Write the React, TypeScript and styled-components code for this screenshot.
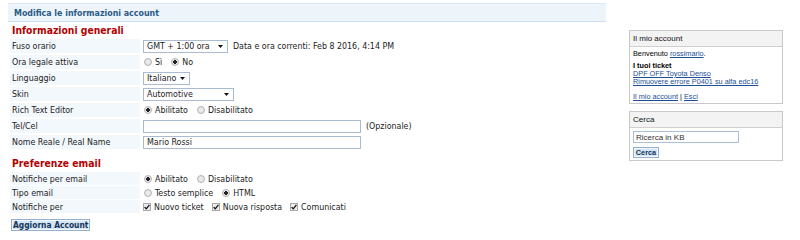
import React from "react";
import styled, { createGlobalStyle } from "styled-components";

const Global = createGlobalStyle`
  html, body { margin: 0; padding: 0; background: #ffffff; }
  body { font-family: "DejaVu Sans Condensed", "DejaVu Sans", Verdana, sans-serif; }
`;

const Page = styled.div`
  display: flex;
  align-items: flex-start;
  gap: 23px;
  padding: 3px 0 0 8px;
  width: 800px;
  height: 240px;
  box-sizing: border-box;
`;

const Main = styled.div`
  width: 598px;
  font-family: "DejaVu Sans Condensed", "DejaVu Sans", Verdana, sans-serif;
  font-size: 8.8px;
  color: #222;
`;

const HeaderBar = styled.div`
  height: 17px;
  display: flex;
  align-items: center;
  padding-left: 6px;
  background: #edf4fa;
  border-top: 1px solid #dde9f4;
  border-bottom: 1px solid #cddff0;
  font-weight: bold;
  color: #2a5a86;
`;

const SectionTitle = styled.div<{ $top: number }>`
  margin: ${(p) => p.$top}px 0 0 4px;
  height: 13px;
  line-height: 13px;
  font-size: 10.3px;
  font-weight: bold;
  color: #b30000;
`;

const Table = styled.div<{ $gap: number; $top: number }>`
  display: grid;
  grid-template-columns: 130px 1fr;
  column-gap: 3px;
  row-gap: ${(p) => p.$gap}px;
  margin: ${(p) => p.$top}px 0 0 2px;
`;

const Label = styled.div<{ $h: number }>`
  height: ${(p) => p.$h}px;
  display: flex;
  align-items: center;
  padding-left: 2px;
  background: #f3f8fd;
`;

const Value = styled.div<{ $h: number }>`
  height: ${(p) => p.$h}px;
  display: flex;
  align-items: center;
`;

const SelectWrap = styled.span<{ $w: number }>`
  position: relative;
  display: inline-flex;
  width: ${(p) => p.$w}px;
  height: 13px;
`;

const Select = styled.select`
  appearance: none;
  -webkit-appearance: none;
  width: 100%;
  height: 100%;
  box-sizing: border-box;
  margin: 0;
  padding: 0 0 0 3px;
  border: 1px solid #a9bcd2;
  border-radius: 0;
  background: #fff;
  font: inherit;
  color: #222;
  line-height: 11px;
  outline: none;
`;

const Arrow = styled.svg`
  position: absolute;
  right: 5px;
  top: 5px;
  width: 5px;
  height: 3px;
  pointer-events: none;
`;

const TextInput = styled.input<{ $w: number }>`
  width: ${(p) => p.$w}px;
  height: 13px;
  box-sizing: border-box;
  margin: 0;
  padding: 0 0 0 3px;
  border: 1px solid #a9bcd2;
  background: #fff;
  font: inherit;
  color: #222;
  outline: none;
`;

const Note = styled.span`
  margin-left: 5px;
`;

const Option = styled.span`
  display: inline-flex;
  align-items: center;
  gap: 3px;
  margin-right: 8px;
`;

const RadioDot = styled.span<{ $on?: boolean }>`
  width: 8px;
  height: 8px;
  box-sizing: border-box;
  border-radius: 50%;
  border: 1px solid #b4b4b4;
  background: radial-gradient(circle at 50% 50%, ${(p) => (p.$on ? "#222 0 1.6px, #e4e4e4 2px" : "#f0f0f0 0, #dcdcdc 100%")});
  margin-left: 1px;
`;

const CheckBox = styled.span`
  width: 8px;
  height: 8px;
  box-sizing: border-box;
  border: 1px solid #a8a8a8;
  background: #ececec;
  display: inline-flex;
  align-items: center;
  justify-content: center;
`;

const Button = styled.button<{ $h: number }>`
  height: ${(p) => p.$h}px;
  margin: 0;
  padding: 0 2px;
  border: 1px solid #93b0cc;
  box-shadow: inset 0 0 0 1px #f2f7fc;
  background: #d6e5f3;
  color: #12355c;
  font-weight: bold;
  line-height: 1;
  white-space: nowrap;
  cursor: pointer;
  display: block;
`;

const MainButton = styled(Button)`
  margin: 6px 0 0 3px;
  padding: 0 1px;
  font-family: "DejaVu Sans Condensed", "DejaVu Sans", Verdana, sans-serif;
  font-size: 8.4px;
`;

const Sidebar = styled.aside`
  width: 154px;
  margin-top: 27px;
  display: flex;
  flex-direction: column;
  gap: 7px;
  font-family: "Liberation Sans", Arial, sans-serif;
  font-size: 7.3px;
  color: #000;
`;

const Box = styled.section`
  border: 1px solid #c9c9c9;
  background: #fff;
`;

const BoxHead = styled.div`
  height: 15px;
  display: flex;
  align-items: center;
  padding-left: 3px;
  background: #f3f3f3;
  border-bottom: 1px solid #d0d0d0;
  font-size: 8px;
  color: #111;
`;

const BoxBody = styled.div`
  padding: 3px 3px 2px;
  line-height: 8px;
`;

const Line = styled.div<{ $top?: number; $bold?: boolean }>`
  margin-top: ${(p) => p.$top ?? 0}px;
  font-weight: ${(p) => (p.$bold ? "bold" : "normal")};
`;

const Link = styled.a`
  color: #1d4f96;
  text-decoration: underline;
`;

const SearchInput = styled.input`
  width: 106px;
  height: 12px;
  box-sizing: border-box;
  margin: 0;
  padding: 0 0 0 2px;
  border: 1px solid #a9c0d8;
  font-family: "Liberation Sans", Arial, sans-serif;
  font-size: 8px;
  color: #333;
  outline: none;
  display: block;
`;

const SearchBody = styled.div`
  padding: 3px 3px 2px;
  display: flex;
  flex-direction: column;
  align-items: flex-start;
  gap: 4px;
`;

const SideButton = styled(Button)`
  width: 26px;
  font-family: "Liberation Sans", Arial, sans-serif;
  font-size: 7.3px;
  padding: 0;
`;

const Tri = () => (
  <Arrow viewBox="0 0 5 3">
    <path d="M0 0H5L2.5 3Z" fill="#111" />
  </Arrow>
);

const Sel = ({ w, value }: { w: number; value: string }) => (
  <SelectWrap $w={w}>
    <Select defaultValue={value}>
      <option>{value}</option>
    </Select>
    <Tri />
  </SelectWrap>
);

const Radio = ({ on, text }: { on?: boolean; text: string }) => (
  <Option>
    <RadioDot $on={on} />
    {text}
  </Option>
);

const Check = ({ text }: { text: string }) => (
  <Option>
    <CheckBox>
      <svg width="6" height="6" viewBox="0 0 6 6">
        <path d="M0.6 3.1L2.3 4.8L5.4 0.9" stroke="#111" strokeWidth="1.3" fill="none" />
      </svg>
    </CheckBox>
    {text}
  </Option>
);

export default function App() {
  return (
    <>
      <Global />
      <Page>
        <Main>
          <HeaderBar>Modifica le informazioni account</HeaderBar>
          <SectionTitle $top={2}>Informazioni generali</SectionTitle>
          <Table $gap={2} $top={2}>
            <Label $h={14}>Fuso orario</Label>
            <Value $h={14}>
              <Sel w={85} value="GMT + 1:00 ora" />
              <Note>Data e ora correnti: Feb 8 2016, 4:14 PM</Note>
            </Value>
            <Label $h={14}>Ora legale attiva</Label>
            <Value $h={14}>
              <Radio text="Sì" />
              <Radio on text="No" />
            </Value>
            <Label $h={14}>Linguaggio</Label>
            <Value $h={14}>
              <Sel w={47} value="Italiano" />
            </Value>
            <Label $h={14}>Skin</Label>
            <Value $h={14}>
              <Sel w={91} value="Automotive" />
            </Value>
            <Label $h={14}>Rich Text Editor</Label>
            <Value $h={14}>
              <Radio on text="Abilitato" />
              <Radio text="Disabilitato" />
            </Value>
            <Label $h={14}>Tel/Cel</Label>
            <Value $h={14}>
              <TextInput $w={218} defaultValue="" />
              <Note>(Opzionale)</Note>
            </Value>
            <Label $h={14}>Nome Reale / Real Name</Label>
            <Value $h={14}>
              <TextInput $w={218} defaultValue="Mario Rossi" />
            </Value>
          </Table>
          <SectionTitle $top={8}>Preferenze email</SectionTitle>
          <Table $gap={1} $top={2}>
            <Label $h={13}>Notifiche per email</Label>
            <Value $h={13}>
              <Radio on text="Abilitato" />
              <Radio text="Disabilitato" />
            </Value>
            <Label $h={13}>Tipo email</Label>
            <Value $h={13}>
              <Radio text="Testo semplice" />
              <Radio on text="HTML" />
            </Value>
            <Label $h={13}>Notifiche per</Label>
            <Value $h={13}>
              <Check text="Nuovo ticket" />
              <Check text="Nuova risposta" />
              <Check text="Comunicati" />
            </Value>
          </Table>
          <MainButton $h={12}>Aggiorna Account</MainButton>
        </Main>
        <Sidebar>
          <Box>
            <BoxHead>Il mio account</BoxHead>
            <BoxBody>
              <Line>
                Benvenuto <Link href="#">rossimario</Link>.
              </Line>
              <Line $top={4} $bold>
                I tuoi ticket
              </Line>
              <Line>
                <Link href="#">DPF OFF Toyota Denso</Link>
              </Line>
              <Line>
                <Link href="#">Rimuovere errore P0401 su alfa edc16</Link>
              </Line>
              <Line $top={7}>
                <Link href="#">Il mio account</Link> | <Link href="#">Esci</Link>
              </Line>
            </BoxBody>
          </Box>
          <Box>
            <BoxHead>Cerca</BoxHead>
            <SearchBody>
              <SearchInput defaultValue="Ricerca in KB" />
              <SideButton $h={11}>Cerca</SideButton>
            </SearchBody>
          </Box>
        </Sidebar>
      </Page>
    </>
  );
}
